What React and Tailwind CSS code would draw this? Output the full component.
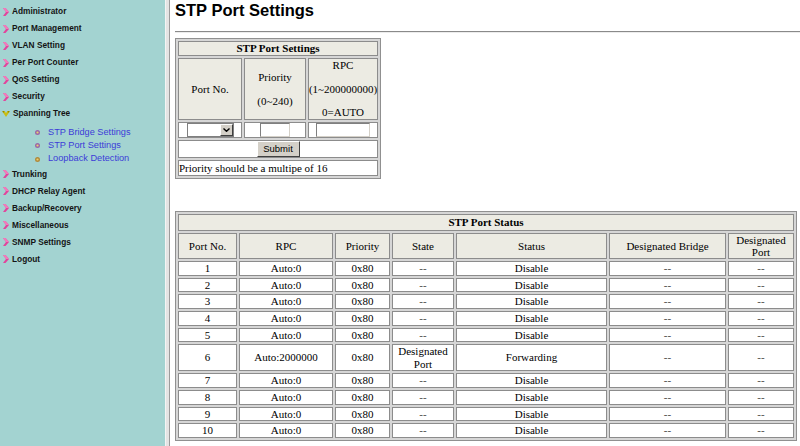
import React from "react";

const menu = [
  { label: "Administrator" },
  { label: "Port Management" },
  { label: "VLAN Setting" },
  { label: "Per Port Counter" },
  { label: "QoS Setting" },
  { label: "Security" },
  {
    label: "Spanning Tree",
    open: true,
    children: ["STP Bridge Settings", "STP Port Settings", "Loopback Detection"],
  },
  { label: "Trunking" },
  { label: "DHCP Relay Agent" },
  { label: "Backup/Recovery" },
  { label: "Miscellaneous" },
  { label: "SNMP Settings" },
  { label: "Logout" },
];

const rows = Array.from({ length: 10 }, (_, i) => ({
  port: i + 1,
  rpc: i === 5 ? "Auto:2000000" : "Auto:0",
  priority: "0x80",
  state: i === 5 ? "Designated Port" : "--",
  status: i === 5 ? "Forwarding" : "Disable",
}));

const Arrow = () => (
  <svg width="6" height="8" viewBox="0 0 6 8" className="shrink-0">
    <polygon points="0,0 2.5,0 6,4 2.5,8 0,8 3,4" fill="#e2449c" />
    <polygon points="0,0 2.5,0 6,4 3,4" fill="#f27cbc" />
  </svg>
);

const OpenArrow = () => (
  <svg width="8" height="6" viewBox="0 0 8 6" className="shrink-0">
    <polygon points="0,0 2.8,0 4,2.2 5.2,0 8,0 4,6" fill="#c9bc10" />
    <circle cx="1.4" cy="0.8" r="0.8" fill="#8a7e00" />
    <circle cx="6.6" cy="0.8" r="0.8" fill="#8a7e00" />
  </svg>
);

const Bullet = ({ gold }) => (
  <svg width="5" height="5" viewBox="0 0 5 5" className="shrink-0">
    <circle cx="2.5" cy="2.5" r="2.5" fill={gold ? "#b08a3c" : "#9a68a8"} />
    <circle cx="2.5" cy="2.5" r="1.1" fill="#e8cf70" />
  </svg>
);

const Sidebar = () => (
  <div className="w-[165px] shrink-0 h-[446px] bg-[#a3d3d1] pt-[3px] font-['Liberation_Sans',Arial,sans-serif]">
    {menu.map((m) => (
      <div key={m.label}>
        <div className="h-[17px] flex items-center pl-[2px]">
          {m.open ? <OpenArrow /> : <span className="pl-px"><Arrow /></span>}
          <span className="ml-[3px] text-[8.3px] font-bold text-[#141414] whitespace-nowrap">
            {m.label}
          </span>
        </div>
        {m.children && (
          <div className="mt-[4px]">
            {m.children.map((c, i) => (
              <div key={c} className="h-[13.3px] flex items-center pl-[35px]">
                <Bullet gold={i === 2} />
                <span className="ml-[8px] text-[9.2px] text-[#3c3cd8] whitespace-nowrap">{c}</span>
              </div>
            ))}
          </div>
        )}
      </div>
    ))}
  </div>
);

const cell = "border border-[#8c8c8c] p-0 text-center";
const head = "bg-[#ecebe3]";

const SettingsTable = () => (
  <table className="table-fixed border-separate border-spacing-[2px] border border-[#909090] bg-[#d6d6d6] w-[206px] text-[11px] font-['Liberation_Serif',serif] text-black">
    <colgroup>
      <col className="w-[64px]" />
      <col className="w-[62px]" />
      <col className="w-[70px]" />
    </colgroup>
    <tbody>
      <tr>
        <td colSpan={3} className={`${cell} ${head} font-bold leading-[13px]`}>
          STP Port Settings
        </td>
      </tr>
      <tr>
        <td className={`${cell} ${head} h-[62px] leading-[12.5px]`}>Port No.</td>
        <td className={`${cell} ${head} h-[62px] leading-[12.5px]`}>
          <div className="flex flex-col items-center gap-[12px]">
            <span>Priority</span>
            <span>(0~240)</span>
          </div>
        </td>
        <td className={`${cell} ${head} h-[62px] leading-[12.5px] whitespace-nowrap`}>
          <div className="flex flex-col items-center gap-[11px]">
            <span>RPC</span>
            <span>(1~200000000)</span>
            <span>0=AUTO</span>
          </div>
        </td>
      </tr>
      <tr>
        <td className={`${cell} bg-white`}>
          <div className="h-[14px] flex justify-center items-center">
            <span className="relative w-[47px] h-[14px] block">
              <select className="appearance-none w-full h-full border border-[#7f7f7f] bg-white text-[10px] outline-none" />
              <span className="absolute right-px top-px bottom-px w-[13px] bg-[#d4d0c8] border border-t-white border-l-white border-r-[#404040] border-b-[#404040] flex items-center justify-center pointer-events-none">
                <svg width="7" height="4" viewBox="0 0 7 4">
                  <polyline points="0.5,0.5 3.5,3.3 6.5,0.5" fill="none" stroke="#000" strokeWidth="1.4" />
                </svg>
              </span>
            </span>
          </div>
        </td>
        <td className={`${cell} bg-white`}>
          <div className="h-[14px] flex justify-center items-center">
            <input className="w-[30px] h-[14px] border border-[#7f7f7f] border-b-[#d4d0c8] border-r-[#d4d0c8] bg-white outline-none" />
          </div>
        </td>
        <td className={`${cell} bg-white`}>
          <div className="h-[14px] flex justify-center items-center">
            <input className="w-[54px] h-[14px] border border-[#7f7f7f] border-b-[#d4d0c8] border-r-[#d4d0c8] bg-white outline-none" />
          </div>
        </td>
      </tr>
      <tr>
        <td colSpan={3} className={`${cell} bg-white`}>
          <div className="h-[16px] flex justify-center items-center">
            <button className="w-[43px] h-[16px] bg-[#d4d0c8] border border-t-white border-l-white border-r-[#404040] border-b-[#404040] text-[9.5px] font-['Liberation_Sans',Arial,sans-serif] leading-none">
              Submit
            </button>
          </div>
        </td>
      </tr>
      <tr>
        <td colSpan={3} className={`${cell} bg-white text-left leading-[14px] whitespace-nowrap`}>
          Priority should be a multipe of 16
        </td>
      </tr>
    </tbody>
  </table>
);

const StatusTable = () => (
  <table className="table-fixed border-separate border-spacing-[2px] border border-[#909090] bg-[#d6d6d6] w-[622px] text-[11px] font-['Liberation_Serif',serif] text-black">
    <colgroup>
      <col className="w-[59px]" />
      <col className="w-[94px]" />
      <col className="w-[55px]" />
      <col className="w-[62px]" />
      <col className="w-[151px]" />
      <col className="w-[117px]" />
      <col className="w-[66px]" />
    </colgroup>
    <tbody>
      <tr>
        <td colSpan={7} className={`${cell} ${head} font-bold leading-[14.6px]`}>
          STP Port Status
        </td>
      </tr>
      <tr className="leading-[12.3px]">
        <td className={`${cell} ${head}`}>Port No.</td>
        <td className={`${cell} ${head}`}>RPC</td>
        <td className={`${cell} ${head}`}>Priority</td>
        <td className={`${cell} ${head}`}>State</td>
        <td className={`${cell} ${head}`}>Status</td>
        <td className={`${cell} ${head}`}>Designated Bridge</td>
        <td className={`${cell} ${head}`}>
          Designated
          <br />
          Port
        </td>
      </tr>
      {rows.map((r) => (
        <tr key={r.port} className="leading-[12.6px]">
          <td className={`${cell} bg-white`}>{r.port}</td>
          <td className={`${cell} bg-white`}>{r.rpc}</td>
          <td className={`${cell} bg-white`}>{r.priority}</td>
          <td className={`${cell} bg-white`}>
            {r.state === "--" ? (
              <span className="text-[#444]">--</span>
            ) : (
              <>
                Designated
                <br />
                Port
              </>
            )}
          </td>
          <td className={`${cell} bg-white`}>{r.status}</td>
          <td className={`${cell} bg-white text-[#444]`}>--</td>
          <td className={`${cell} bg-white text-[#444]`}>--</td>
        </tr>
      ))}
    </tbody>
  </table>
);

export default function App() {
  return (
    <div className="w-[800px] h-[446px] flex overflow-hidden bg-white">
      <Sidebar />
      <div className="w-[5px] shrink-0 h-[446px] bg-[#e4e4e4] border-l border-l-[#f4f4f4] border-r border-r-[#9c9c9c]" />
      <div className="flex-1 pl-[5px]">
        <h1 className="mt-[1px] text-[16.5px] leading-[19px] font-bold font-['Liberation_Sans',Arial,sans-serif] text-black">
          STP Port Settings
        </h1>
        <div className="mt-[11px] h-px bg-[#8a8a8a]" />
        <div className="h-px bg-[#ececec]" />
        <div className="mt-[5px]">
          <SettingsTable />
        </div>
        <div className="mt-[32px]">
          <StatusTable />
        </div>
      </div>
    </div>
  );
}
